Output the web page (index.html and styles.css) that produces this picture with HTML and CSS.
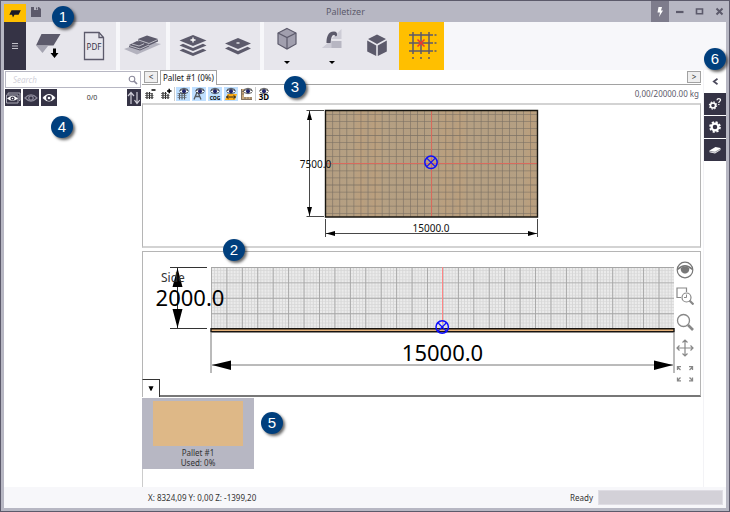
FILE: index.html
```html
<!DOCTYPE html>
<html lang="en">
<head>
<meta charset="utf-8">
<title>Palletizer</title>
<link rel="stylesheet" href="styles.css">
</head>
<body>
<div class="window">
  <header class="titlebar">
    <div class="app-logo"><svg width="12" height="9" viewBox="0 0 12 9"><path d="M2.500 1.300H11.800L9.600 5.800H5.500L4 8.500 3 5.800H0.300Z" fill="#1c1a26"/></svg></div>
    <button class="quick-save" aria-label="Save"><svg width="10" height="10" viewBox="0 0 10 10"><path d="M0 0H8L10 2V10H0Z" fill="#5c5a6b"/><path d="M3 0H7V3H3Z" fill="#b7b7c3"/><path d="M5 .5H6.200V2.500H5ZM2 6H8V6.800H2Z" fill="#5c5a6b"/></svg></button>
    <h1 class="title">Palletizer</h1>
    <div class="window-controls">
      <button class="bolt" aria-label="Quick actions"><svg width="6" height="10" viewBox="0 0 6 10"><path d="M1.500 0H5L4 3.500H6L2 10 3 5.500H.5Z" fill="#fff"/></svg></button>
      <button aria-label="Minimize"><svg width="9" height="9" viewBox="0 0 9 9"><path d="M1 5H8.500" stroke="#5c5a6b" stroke-width="2.200"/></svg></button>
      <button aria-label="Maximize"><svg width="9" height="9" viewBox="0 0 9 9"><path d="M1.500 2H7.500V6.800H1.500Z" fill="none" stroke="#5c5a6b" stroke-width="1.600"/></svg></button>
      <button aria-label="Close"><svg width="9" height="9" viewBox="0 0 9 9"><path d="M1.500 1.500 7.500 7.500M7.500 1.500 1.500 7.500" stroke="#5c5a6b" stroke-width="2"/></svg></button>
    </div>
    <span class="badge badge-title">1</span>
  </header>

  <nav class="ribbon" aria-label="Ribbon">
    <button class="menu" aria-label="Menu"><svg width="8" height="8" viewBox="0 0 8 8"><path d="M1 1.500H7M1 4H7M1 6.500H7" stroke="#e7e6ec" stroke-width=".8"/></svg></button>
    <div class="group">
      <button aria-label="Import pallet"><svg width="28" height="30" viewBox="0 0 28 30"><path d="M6.500 3H25.500L18.500 14.500H1Z" fill="#5c5a6b"/><path d="M1.500 15H13L7.500 22Z" fill="#a5a4b1"/><path d="M18 17.500H21V22H23.500L19.500 27 15.500 22H18Z" fill="#000"/></svg></button>
      <button aria-label="Export PDF"><svg width="24" height="30" viewBox="0 0 24 30"><path d="M2.500 1.500H17L21.500 6.500V28.500H2.500Z" fill="none" stroke="#5c5a6b" stroke-width="1.300"/><path d="M17 1.500V6.500H21.500" fill="none" stroke="#5c5a6b" stroke-width="1.300"/><text x="12" y="18.500" class="pdf">PDF</text></svg></button>
    </div>
    <div class="group">
      <button aria-label="Place parts"><svg width="38" height="24" viewBox="0 0 38 24"><path d="M0 15 22 7 37 10 13 20.500Z" fill="#b3b2be"/><path d="M5 11 13 7 25 11V12.500L16 16.500 5 13Z" fill="#5c5a6b"/><path d="M14 5 23 1.500 34 5V7.500L25 11.500 14 7.500Z" fill="#5c5a6b"/><path d="M5 11.500 16 15 25 11M8 10 15 12 20 9.800M14 5.800 25 9.500 34 5.500" fill="none" stroke="#e7e6ec" stroke-width=".7"/></svg></button>
    </div>
    <div class="group">
      <button aria-label="Add layer"><svg width="30" height="24" viewBox="0 0 30 24"><path d="M15 1 28.500 6.500 15 12 1.500 6.500Z" fill="#5c5a6b"/><path d="M1.500 11.500 5 9.800 15 14 25 9.800 28.500 11.500 15 17ZM1.500 16.500 5 14.800 15 19 25 14.800 28.500 16.500 15 22Z" fill="#5c5a6b"/><path d="M15 3.500V8.500M12.500 6H17.500" stroke="#fff" stroke-width="1.300"/></svg></button>
      <button aria-label="Remove layer"><svg width="28" height="24" viewBox="0 0 28 24"><path d="M14 4 27 9.500 14 15 1 9.500Z" fill="#5c5a6b"/><path d="M1 14.500 4.500 12.800 14 17 23.500 12.800 27 14.500 14 20.500Z" fill="#5c5a6b"/><path d="M12.500 9H15.500" stroke="#fff" stroke-width="1.200"/></svg></button>
    </div>
    <div class="group">
      <button aria-label="View cube"><svg width="22" height="24" viewBox="0 0 22 24"><path d="M11 1.500 20 6V17L11 22 2 17V6Z" fill="#a19fae" stroke="#5c5a6b" stroke-width="1.200"/><path d="M2 6 11 10.500 20 6M11 10.500V22" fill="none" stroke="#5c5a6b" stroke-width="1.200"/></svg><span class="caret"></span></button>
      <button aria-label="Rotate"><svg width="22" height="24" viewBox="0 0 22 24"><path d="M20.500 2V12H10.500Z" fill="#cdccd6"/><path d="M10.500 14H20.500V21H1.500Z" fill="#b7b6c2"/><path d="M1 21 10.500 13V21Z" fill="#cdccd6"/><path d="M5.500 16C5.500 11 6.500 4.500 13 4.500 15.500 4.500 16.300 6 16 8.500L14.800 9.500C14 8 12.500 7.500 11.500 8.500 10 10 10 13 9.500 16Z" fill="#5c5a6b"/></svg><span class="caret"></span></button>
      <button aria-label="Solid view"><svg width="22" height="24" viewBox="0 0 22 24"><path d="M11 0.500 20 5 11 10 2 5ZM1.200 6.500 10.200 11.500V22L1.200 17.500ZM20.800 6.500 11.800 11.500V22L20.800 17.500Z" fill="#5c5a6b"/></svg></button>
    </div>
    <button class="grid-toggle" aria-label="Snap grid" aria-pressed="true"><svg width="30" height="30" viewBox="0 0 30 30"><path d="M6 1V23M14 1V23M22 1V23M2 4H26M2 12H26M2 20H26" stroke="#5c5a6b" stroke-width="1.500"/><path d="M27.500 4H29.500M27.500 12H29.500M27.500 20H29.500M6 26V28M14 26V28M22 26V28" stroke="#5c5a6b" stroke-width="1.500"/><path d="M10.500 8.500 17.500 15.500M17.500 8.500 10.500 15.500" stroke="#f0352b" stroke-width="1.500"/></svg></button>
  </nav>

  <div class="workspace">
    <aside class="parts">
      <div class="search">
        <input type="search" aria-label="Search" placeholder="Search">
        <svg width="10" height="10" viewBox="0 0 10 10"><circle cx="4" cy="4" r="2.800" fill="none" stroke="#8b899b" stroke-width="1.100"/><path d="M6 6 9 9" stroke="#8b899b" stroke-width="1.700"/></svg>
      </div>
      <div class="filters">
        <button aria-label="Show all"><svg width="16" height="12" viewBox="0 0 16 12"><path d="M3 2.500V1H15V8.500H14M1.500 3H13V11H1.500Z" fill="none" stroke="#aaa9b5"/><path d="M2 6.500Q7.500 1 13 6.500 7.500 11 2 6.500Z" fill="#fff"/><circle cx="7.500" cy="6.500" r="2" fill="#353345"/><circle cx="7.500" cy="6.500" r=".8" fill="#fff"/></svg></button>
        <button aria-label="Show hidden"><svg width="14" height="12" viewBox="0 0 14 12"><path d="M1 6Q7-.5 13 6 7 12 1 6Z" fill="none" stroke="#8c8a9a" stroke-width="1.200"/><circle cx="7" cy="6" r="2.200" fill="none" stroke="#8c8a9a" stroke-width="1.200"/></svg></button>
        <button aria-label="Show visible"><svg width="14" height="12" viewBox="0 0 14 12"><path d="M.5 6Q7-2 13.500 6 7 13 .5 6Z" fill="#fff"/><circle cx="7" cy="6" r="2.900" fill="#353345"/><circle cx="7" cy="6" r="1.300" fill="#fff"/></svg></button>
        <span class="count">0/0</span>
        <button class="sort" aria-label="Sort"><svg width="14" height="14" viewBox="0 0 14 14"><path d="M4 13V2M1 5 4 1.500 7 5M10 1V12M7.500 9 10 12.500 12.800 9" fill="none" stroke="#d0cfd8" stroke-width="1.200"/></svg></button>
      </div>
      <span class="badge badge-parts">4</span>
    </aside>

    <main class="center">
      <div class="tabs">
        <button class="tab-scroll" aria-label="Previous tab">&lt;</button>
        <button class="tab">Pallet #1 (0%)</button>
        <button class="tab-scroll tab-next" aria-label="Next tab">&gt;</button>
      </div>
      <div class="toolbar">
        <button aria-label="Coarser grid"><svg width="12" height="12" viewBox="0 0 12 12"><path d="M3 4V11M5.500 4V11M8 5V11" stroke="#222" stroke-width="1.200"/><path d="M1 5.500H8.500M1 7.500H9.500M1 9.500H9.500" stroke="#444" stroke-width=".7"/><path d="M7.500 2H11.500" stroke="#000" stroke-width="1.500"/></svg></button>
        <button aria-label="Finer grid"><svg width="12" height="12" viewBox="0 0 12 12"><path d="M3 4V11M5.500 4V11M8 6V11" stroke="#222" stroke-width="1.200"/><path d="M1 5.500H7M1 7.500H9.500M1 9.500H9.500" stroke="#444" stroke-width=".7"/><path d="M7 3H11.500M9.200 .8V5.200" stroke="#000" stroke-width="1.500"/></svg></button>
        <span class="separator"></span>
        <button class="on" aria-label="Show grid"><svg width="14" height="14" viewBox="0 0 14 14"><path d="M3.500 6V12.500M6 6V12.500M8.500 7V12.500" stroke="#555a60" stroke-width="1.100"/><path d="M1.500 6.500H10M1.500 8.500H10.500M1.500 10.500H10.500" stroke="#666b72" stroke-width=".7"/><use href="#mini-eye"/></svg></button>
        <button class="on" aria-label="Show labels"><svg width="14" height="14" viewBox="0 0 14 14"><path d="M2 12.500 5.500 4 9 12.500M3.500 9.500H7.500" fill="none" stroke="#555a60" stroke-width="1.300"/><use href="#mini-eye"/></svg></button>
        <button class="on" aria-label="Show centre of gravity"><svg width="14" height="14" viewBox="0 0 14 14"><use href="#mini-eye" x="-1"/><text x="7" y="12.500" class="cog">COG</text></svg></button>
        <button class="on" aria-label="Show dimensions"><svg width="14" height="14" viewBox="0 0 14 14"><path d="M3.500 7H13L11 13H1Z" fill="#ffad16"/><path d="M2.500 10H11.500M4.500 8.300 2.500 10 4.500 11.700M9.500 8.300 11.500 10 9.500 11.700" fill="none" stroke="#222"/><use href="#mini-eye" x="-1"/></svg></button>
        <button aria-label="Show rulers"><svg width="14" height="14" viewBox="0 0 14 14"><path d="M1 2H4V10H12V13H1Z" fill="#cba97c"/><path d="M1.500 2V12.500H12M2 4.500H4M2 7H4M5 12V10M8 12V10M11 12V10" fill="none" stroke="#6d6257" stroke-width=".8"/><use href="#mini-eye"/></svg></button>
        <span class="separator"></span>
        <button aria-label="3D view"><svg width="14" height="14" viewBox="0 0 14 14"><use href="#mini-eye" x="-1"/><text x="7" y="13" class="three-d">3D</text></svg></button>
        <output class="weight">0,00/20000.00 kg</output>
        <span class="badge badge-toolbar">3</span>
      </div>

      <section class="view top-view" aria-label="Top view">
        <svg class="drawing" viewBox="143 105 557 141">
          <defs>
            <symbol id="mini-eye" width="14" height="14" viewBox="0 0 14 14"><path d="M3.500 4Q8 0 12.500 4 8 8 3.500 4Z" fill="#fff"/><path d="M3 4.200Q8 1 13 4.200M4 2.500Q8 0 12 2.500M4 5.500Q8 8 12 5.500" fill="none" stroke="#333" stroke-width=".8"/><circle cx="8" cy="4.300" r="2" fill="#20246b"/></symbol>
            <linearGradient id="wood" x2=".2" spreadMethod="reflect"><stop stop-color="#b49e81"/><stop offset=".6" stop-color="#b5a083"/><stop offset=".85" stop-color="#bb9f7d"/><stop offset="1" stop-color="#b49e81"/></linearGradient>
          </defs>
          <path d="M325.500 110.500H537.500V217H325.500Z" fill="url(#wood)"/>
          <path d="M325.200 163.700H537.500" stroke="#7b7064" stroke-opacity=".75" stroke-width="106" stroke-dasharray=".8 6.270"/>
          <path d="M431.500 113.900V217" stroke="#7b7064" stroke-opacity=".75" stroke-width="212" stroke-dasharray=".8 6.270"/>
          <path d="M325.500 163.500H537.500M431.500 110.500V217" stroke="#e0675a" stroke-width=".9"/>
          <path d="M325.500 110.500H537.500V217H325.500Z" fill="none" stroke="#17150f" stroke-width="1.400"/>
          <path d="M306.500 110.500H324M306.500 216.500H324M309.500 111V216M325.500 219V237M537.500 219V237M326 233.500H537" stroke="#333" fill="none" stroke-width=".9"/>
          <path d="M309.500 111 312 120H307ZM309.500 216 312 207H307ZM326 233.500 335 231V236ZM537 233.500 528 231V236Z"/>
          <text x="315.500" y="167.500" class="dim">7500.0</text>
          <text x="431" y="231.500" class="dim">15000.0</text>
          <g fill="none" stroke="#0d0dff"><circle cx="431" cy="162.300" r="6.200" stroke-width="1.500"/><path d="M427 158.300 435 166.300M435 158.300 427 166.300" stroke-width="1.200"/></g>
        </svg>
      </section>

      <section class="view side-view" aria-label="Side view">
        <svg class="drawing" viewBox="143 252 557 143">
          <path d="M211 267H674V328H211Z" fill="#ebebeb"/>
          <path d="M211 297.500H674" stroke="#d6d6d6" stroke-width="61" stroke-dasharray=".9 2.186"/>
          <path d="M442.500 267V328" stroke="#d6d6d6" stroke-opacity=".7" stroke-width="463" stroke-dasharray=".9 2.186"/>
          <path d="M211 297.500H674" stroke="#a6a6a6" stroke-width="61" stroke-dasharray=".9 14.533"/>
          <path d="M442.500 267V328" stroke="#a6a6a6" stroke-width="463" stroke-dasharray=".9 14.533"/>
          <path d="M442.500 267V323" stroke="#ff8585"/>
          <path d="M211 328.800H674V331.800H211Z" fill="#e5b27b" stroke="#17130f" stroke-width="1.400"/>
          <path d="M170 267.500H207M170 328.500H207M177.500 268V328" stroke="#333" fill="none"/>
          <path d="M211 333V373M674 333V373M212 365H673" stroke="#777" fill="none"/>
          <path d="M177.500 268 182.500 287H172.500ZM177.500 328 182.500 309H172.500ZM212 365 231 360.500V370ZM673 365 654 360.500V370Z"/>
          <text x="161" y="282" class="view-name">Side</text>
          <text x="190" y="306" class="dim-large">2000.0</text>
          <text x="442.500" y="361" class="dim-large">15000.0</text>
          <g fill="none" stroke="#0d0dff"><circle cx="442.200" cy="327" r="6.200" stroke-width="1.500"/><path d="M438.200 323 446.200 331M446.200 323 438.200 331" stroke-width="1.200"/></g>
        </svg>
        <div class="view-tools">
          <button aria-label="Orbit"><svg width="18" height="18" viewBox="0 0 18 18"><circle cx="9" cy="9" r="7.800" fill="none" stroke="#777" stroke-width="1.200"/><path d="M1.500 8.500Q9 1 16.500 8.500" fill="none" stroke="#777" stroke-width="1.500"/><path d="M4.700 7Q9 3.500 13.300 7C13.500 10 12 12.500 9 12.500S4.500 10 4.700 7Z" fill="#777"/></svg></button>
          <button aria-label="Zoom window"><svg width="18" height="18" viewBox="0 0 18 18"><path d="M5 10.500H1V1H10.500V5" fill="none" stroke="#888" stroke-width="1.200"/><circle cx="10.500" cy="10.500" r="4.500" fill="none" stroke="#888" stroke-width="1.200"/><path d="M8 10.500H10.500V7.500" fill="none" stroke="#888"/><path d="M13.500 13.500 17.500 17.500" stroke="#888" stroke-width="2.200"/></svg></button>
          <button aria-label="Zoom"><svg width="18" height="18" viewBox="0 0 18 18"><circle cx="7.500" cy="7.500" r="6" fill="none" stroke="#888" stroke-width="1.300"/><path d="M12 12 17 17" stroke="#888" stroke-width="2.600"/></svg></button>
          <button aria-label="Pan"><svg width="18" height="18" viewBox="0 0 18 18"><path d="M9 1V17M1 9H17M6.500 3.500 9 1 11.500 3.500M6.500 14.500 9 17 11.500 14.500M3.500 6.500 1 9 3.500 11.500M14.500 6.500 17 9 14.500 11.500" fill="none" stroke="#888" stroke-width="1.200"/></svg></button>
          <button aria-label="Fit view"><svg width="18" height="18" viewBox="0 0 18 18"><path d="M4.500 5 1.500 2M1.500 5V1.700H5M13.500 5 16.500 2M13 1.700H16.500V5M4.500 12.500 1.500 15.500M1.500 12.500V15.800H5M13.500 12.500 16.500 15.500M16.500 12.500V15.800H13" fill="none" stroke="#888" stroke-width="1.300"/></svg></button>
        </div>
        <button class="collapse" aria-label="Collapse pallet list"><svg width="6" height="5" viewBox="0 0 6 5"><path d="M.5 .3H5.500L3.500 4.800H2.500Z"/></svg></button>
        <span class="badge badge-view">2</span>
      </section>

      <section class="pallets" aria-label="Pallets">
        <button class="pallet">
          <span class="swatch"></span>
          <span>Pallet #1</span>
          <span>Used: 0%</span>
        </button>
        <span class="badge badge-pallets">5</span>
      </section>
    </main>

    <aside class="rail">
      <button class="expand" aria-label="Expand panel"><svg width="6" height="7" viewBox="0 0 6 7"><path d="M5.500 .8 1.800 3.500 5.500 6.200" fill="none" stroke="#4b495b" stroke-width="1.700"/></svg></button>
      <button aria-label="Help settings"><svg width="14" height="14" viewBox="0 0 14 14"><circle cx="5" cy="8.500" r="2.500" fill="none" stroke="#fff" stroke-width="1.500"/><circle cx="5" cy="8.500" r="3.600" fill="none" stroke="#fff" stroke-width="1.200" stroke-dasharray="1.400 1.427"/><path d="M9 3.200C9 1 12.800 1 12.500 3.200 12.300 4.500 10.800 4.300 10.800 6M10.800 7V8" fill="none" stroke="#fff" stroke-width="1.200"/></svg></button>
      <button aria-label="Settings"><svg width="14" height="14" viewBox="0 0 14 14"><circle cx="7" cy="7" r="3.400" fill="none" stroke="#fff" stroke-width="2.300"/><circle cx="7" cy="7" r="5" fill="none" stroke="#fff" stroke-width="1.700" stroke-dasharray="2.200 1.727"/></svg></button>
      <button aria-label="Materials"><svg width="14" height="10" viewBox="0 0 14 10"><path d="M1.500 5.500 7.500 2 12.500 3V5L7 8.500 1.500 7.300Z" fill="#fff"/><path d="M1.500 6.200 7 7.200 12.500 4" fill="none" stroke="#353345" stroke-width=".5"/></svg></button>
      <span class="badge badge-rail">6</span>
    </aside>
  </div>

  <footer class="status">
    <span>X: 8324,09 Y: 0,00 Z: -1399,20</span>
    <span class="ready">Ready</span>
    <div class="progress" role="progressbar" aria-label="Progress" aria-valuenow="0"></div>
  </footer>
</div>
</body>
</html>
```

FILE: styles.css
```css
* { box-sizing: border-box; }

body {
  margin: 0;
  font-family: "Noto Sans", "Open Sans", sans-serif;
  font-size: 8px;
  line-height: 10px;
  color: #333;
}

button {
  margin: 0;
  padding: 0;
  border: 0;
  background: none;
  font: inherit;
  color: inherit;
  display: flex;
  align-items: center;
  justify-content: center;
}

svg { display: block; flex: none; }

.window {
  display: flex;
  flex-direction: column;
  min-height: 100vh;
  padding: 0 3px 3px;
  border: 1px solid #5c5a6b;
  background: #b7b7c3;
}

/* Title bar */
.titlebar {
  position: relative;
  display: flex;
  align-items: stretch;
  height: 21px;
  margin-right: -3px;
}

.app-logo {
  display: flex;
  align-items: center;
  justify-content: center;
  width: 22px;
  margin-top: 3px;
  background: #ffbf00;
}

.quick-save { width: 20px; }

.title {
  flex: 1;
  margin: 0;
  padding-right: 6px;
  font-size: 9px;
  font-weight: 400;
  line-height: 22px;
  text-align: center;
  color: #5c5a6b;
}

.window-controls { display: flex; }
.window-controls button { width: 20px; }
.window-controls .bolt { width: 18px; background: #7e7c8c; }

/* Ribbon */
.ribbon {
  display: flex;
  height: 48px;
  background: #f7f7fa;
}

.menu { width: 22px; background: #353345; }

.group {
  display: flex;
  margin-right: 4px;
  background: #e7e6ec;
}

.group:nth-last-child(2) { margin-right: 0; }

.group button,
.grid-toggle {
  width: 45px;
}

.grid-toggle { background: #ffbf00; }
.group:nth-of-type(2) button { width: 46px; }

.group button:has(.caret) {
  flex-direction: column;
  justify-content: flex-start;
  gap: 10px;
  padding-top: 5px;
}

.caret {
  border: 3px solid transparent;
  border-top-color: #000;
  border-bottom: 0;
}

.pdf { font-size: 8px; text-anchor: middle; fill: #353345; }

/* Workspace */
.workspace {
  flex: 1;
  display: grid;
  grid-template-columns: 138px 1fr 22px;
  background: #fff;
}

.parts { position: relative; padding: 1px; }

.search {
  display: flex;
  align-items: center;
  height: 17px;
  padding: 0 2px 0 7px;
  border: 1px solid #b7b7c3;
}

.search input {
  flex: 1;
  min-width: 0;
  padding: 0;
  border: 0;
  outline: 0;
  font: italic 8px/12px "Noto Sans", sans-serif;
}

.search input::placeholder { color: #d2d1da; }

.filters {
  display: flex;
  align-items: center;
  gap: 2px;
  padding-top: 1px;
}

.filters button { width: 16px; height: 17px; background: #353345; }
.count { flex: 1; text-align: center; font-size: 7px; }
.filters .sort { width: 14px; }

/* Centre column */
.center {
  display: flex;
  flex-direction: column;
  min-width: 0;
  padding-right: 2px;
  border-right: 1px solid #f3f3f6;
}

.tabs {
  display: flex;
  align-items: flex-end;
  height: 15px;
  padding-left: 2px;
  border-bottom: 1px solid #a2a2a2;
}

.tab-scroll {
  width: 14px;
  height: 12px;
  margin-bottom: 1px;
  border: 1px solid #a2a2a2;
  background: #efefef;
}

.tab-next { margin-left: auto; }

.tab {
  height: 15px;
  margin: 0 0 -1px 2px;
  padding: 0 2px;
  border: 1px solid #a2a2a2;
  border-bottom: 0;
  background: #fff;
  color: #111;
}

.toolbar {
  position: relative;
  display: flex;
  align-items: center;
  gap: 2px;
  height: 18px;
  padding-left: 1px;
}

.toolbar button { width: 14px; height: 14px; }
.toolbar .on { background: #bfdfff; }
.separator { width: 1px; height: 14px; margin: 0 -1px; background: #ccc; }
.weight { margin-left: auto; padding-right: 2px; color: #5c5a6b; }
.cog { font: bold 5px "Noto Sans", sans-serif; text-anchor: middle; }
.three-d { font: bold 8px "Noto Sans", sans-serif; text-anchor: middle; }

.view { position: relative; border: 1px solid #b5b5b5; }
.drawing { width: 100%; height: auto; }

.top-view {
  margin-bottom: 3px;
  border-top: 2px solid #d3d3d3;
  border-bottom: 2px solid #d3d3d3;
}

.side-view { margin-bottom: 1px; border-bottom: 2px solid #777; }

.dim { font-size: 10px; text-anchor: middle; fill: #111; }
.dim-large { font-size: 22px; text-anchor: middle; fill: #000; }
.view-name { font-size: 12px; fill: #333; }

.view-tools {
  position: absolute;
  top: 9px;
  right: 6px;
  display: flex;
  flex-direction: column;
  gap: 8px;
}

.collapse {
  position: absolute;
  left: -1px;
  bottom: -2px;
  width: 18px;
  height: 18px;
  border: 1px solid #333;
  border-left-color: #b5b5b5;
  border-bottom: 0;
  background: #fff;
}

.pallets {
  position: relative;
  flex: 1;
  border-left: 1px solid #ccc;
}

.pallet {
  flex-direction: column;
  justify-content: flex-start;
  width: 112px;
  height: 71px;
  margin-left: -1px;
  padding-top: 3px;
  background: #b7b7c3;
}

.swatch {
  width: 90px;
  height: 45px;
  margin-bottom: 2px;
  background: #deb887;
}

/* Right rail */
.rail {
  position: relative;
  display: flex;
  flex-direction: column;
  gap: 1px;
}

.rail button { height: 22px; background: #353345; }
.rail .expand { background: #fff; }

/* Status bar */
.status {
  display: flex;
  align-items: center;
  height: 21px;
  padding: 0 3px 0 144px;
  background: #f7f7fa;
}

.ready { margin-left: auto; }

.progress {
  width: 125px;
  height: 15px;
  margin-left: 5px;
  border: 1px solid #dfdde4;
  background: #d3d1d8;
}

/* Numbered callouts */
.badge {
  position: absolute;
  z-index: 2;
  width: 22px;
  height: 22px;
  border-radius: 50%;
  background: #003f7d;
  box-shadow: 2px 2px 3px #0009;
  font: 15px/22px "Liberation Sans", sans-serif;
  text-align: center;
  color: #fff;
}

.badge-title { left: 48px; top: 5px; }
.badge-parts { left: 47px; top: 46px; }
.badge-toolbar { left: 142px; top: -9px; }
.badge-view { left: 80px; top: -13px; }
.badge-pallets { left: 118px; top: 14px; }
.badge-rail { left: 0; top: -22px; }
```
